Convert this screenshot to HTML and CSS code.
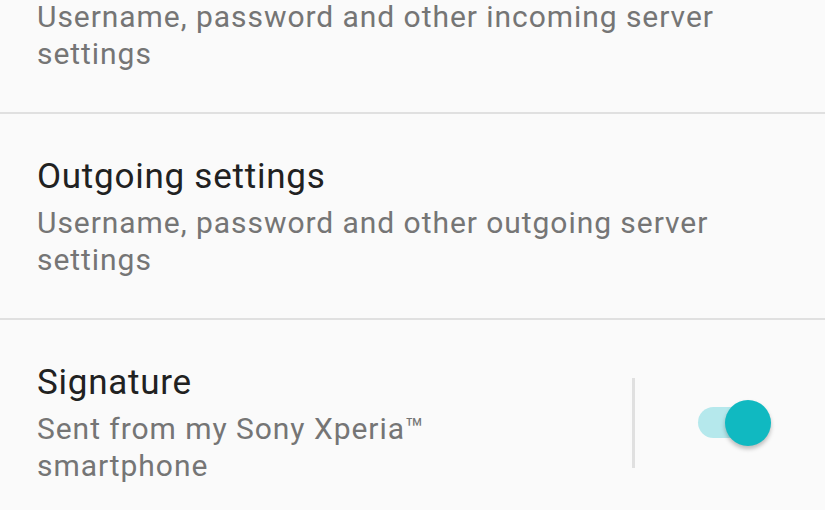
FILE: index.html
```html
<!DOCTYPE html>
<html lang="en">

<head>
    <meta charset="UTF-8">
    <meta name="viewport" content="width=device-width, initial-scale=1.0">
    <title>Account settings</title>
    <link rel="stylesheet" href="styles.css">
</head>

<body>
    <div class="settings">
        <div class="pref">
            <div class="pref-text">
                <div class="pref-title">Incoming settings</div>
                <div class="pref-summary">Username, password and other incoming server settings</div>
            </div>
        </div>

        <div class="pref">
            <div class="pref-text">
                <div class="pref-title">Outgoing settings</div>
                <div class="pref-summary">Username, password and other outgoing server settings</div>
            </div>
        </div>

        <div class="pref pref-switch">
            <div class="pref-text">
                <div class="pref-title">Signature</div>
                <div class="pref-summary">Sent from my Sony Xperia&trade; smartphone</div>
            </div>
            <div class="divider-v"></div>
            <div class="switch on">
                <div class="track"></div>
                <div class="thumb"></div>
            </div>
        </div>
    </div>
</body>

</html>
```

FILE: styles.css
```css
body {
    margin: 0;
    background: #fafafa;
    font-family: Roboto, "Noto Sans", sans-serif;
    overflow: hidden;
}

/* list is scrolled, first item is cut off at the top */
.settings {
    margin-top: -92px;
}

.pref {
    display: flex;
    align-items: center;
    padding: 42px 54px 40px 37px;
    border-bottom: 2px solid #e0e0e0;
}

.pref-text {
    flex: 1;
}

.pref-title {
    font-size: 35px;
    letter-spacing: 0.75px;
    line-height: 41px;
    color: #212121;
    margin-bottom: 7px;
}

.pref-summary {
    font-size: 30px;
    letter-spacing: 0.95px;
    line-height: 37px;
    color: #757575;
    padding-right: 40px;
}

.pref-switch .pref-summary {
    padding-right: 0;
}

.divider-v {
    width: 3px;
    height: 90px;
    background: #e0e0e0;
    margin-left: 72px;
    margin-right: 63px;
}

.switch {
    position: relative;
    width: 73px;
    height: 46px;
}

.track {
    position: absolute;
    left: 0;
    top: 7px;
    width: 60px;
    height: 31px;
    border-radius: 16px;
    background: #b5e8ec;
}

.thumb {
    position: absolute;
    right: 0;
    top: 0;
    width: 46px;
    height: 46px;
    border-radius: 50%;
    background: #10b9c1;
    box-shadow: 0 3px 4px rgba(0, 0, 0, 0.25);
}
```
